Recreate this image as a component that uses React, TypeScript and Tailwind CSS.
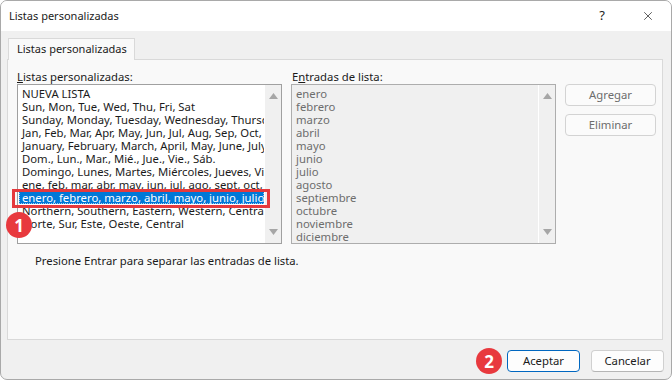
import { X } from 'lucide-react';

const customLists = [
  'NUEVA LISTA',
  'Sun, Mon, Tue, Wed, Thu, Fri, Sat',
  'Sunday, Monday, Tuesday, Wednesday, Thursday, Friday, Saturday',
  'Jan, Feb, Mar, Apr, May, Jun, Jul, Aug, Sep, Oct, Nov, Dec',
  'January, February, March, April, May, June, July, August, September, October, November, December',
  'Dom., Lun., Mar., Mié., Jue., Vie., Sáb.',
  'Domingo, Lunes, Martes, Miércoles, Jueves, Viernes, Sábado',
  'ene, feb, mar, abr, may, jun, jul, ago, sept, oct, nov, dic',
  'enero, febrero, marzo, abril, mayo, junio, julio, agosto, septiembre, octubre, noviembre, diciembre',
  'Northern, Southern, Eastern, Western, Central',
  'Norte, Sur, Este, Oeste, Central',
];

const entries = [
  'enero',
  'febrero',
  'marzo',
  'abril',
  'mayo',
  'junio',
  'julio',
  'agosto',
  'septiembre',
  'octubre',
  'noviembre',
  'diciembre',
];

function ScrollArrows() {
  return (
    <div className="w-[17px] flex flex-col justify-between items-center py-[8px] bg-[#f0f0f0] border-l border-white">
      <svg width="9" height="6" viewBox="0 0 9 6">
        <path d="M0 6 L4.5 0 L9 6 Z" fill="#a6a6a6" />
      </svg>
      <svg width="9" height="6" viewBox="0 0 9 6">
        <path d="M0 0 L4.5 6 L9 0 Z" fill="#a6a6a6" />
      </svg>
    </div>
  );
}

function Badge({ n }: { n: string }) {
  return (
    <div className="w-[26px] h-[26px] rounded-full bg-[#e8393e] text-white flex items-center justify-center text-[17px] font-bold leading-none">
      {n}
    </div>
  );
}

export default function App() {
  return (
    <div
      className="w-[672px] h-[380px] flex flex-col bg-[#f0f0f0] border border-[#a9a9a9] rounded-[7px] overflow-hidden text-[11.3px] text-[#1b1b1b]"
      style={{ fontFamily: '"Segoe UI", "Noto Sans", sans-serif' }}
    >
      {/* Title bar */}
      <div className="h-[30px] bg-white flex items-center justify-between pl-[8px] pr-[16px] shrink-0 text-[11px]">
        <span>Listas personalizadas</span>
        <div className="flex items-center gap-[36px]">
          <span className="text-[13px]">?</span>
          <X size={14} strokeWidth={1.2} />
        </div>
      </div>

      {/* Body */}
      <div className="px-[6px] pt-[7px] flex flex-col">
        <div className="flex">
          <div className="ml-[1px] w-[127px] h-[22px] bg-[#f9f9f9] border border-b-0 border-[#d9d9d9] -mb-px relative z-10 flex items-center pl-[8px] whitespace-nowrap text-[11px]">
            Listas personalizadas
          </div>
        </div>

        <div className="h-[281px] w-[656px] bg-[#f9f9f9] border border-[#d9d9d9] pl-[9px] pt-[10px]">
          <div className="flex gap-[9px]">
            {/* Left list */}
            <div className="w-[265px] flex flex-col">
              <div className="h-[14px] leading-[14px]">
                <span className="underline">L</span>istas personalizadas:
              </div>
              <div className="relative h-[160px] bg-white border border-[#a0a0a0] flex">
                <div className="flex-1 overflow-hidden pt-[2px] pl-[1px]">
                  {customLists.map((item, i) => (
                    <div
                      key={i}
                      className={
                        'h-[13px] leading-[13px] whitespace-nowrap pl-[3px] ' +
                        (i === 8 ? 'bg-[#0078d7] text-white outline outline-1 outline-dotted outline-[#9fc7ee] -outline-offset-1' : '')
                      }
                    >
                      {item}
                    </div>
                  ))}
                </div>
                <ScrollArrows />
                {/* annotation overlays */}
                <div className="absolute left-[-6px] top-[104px] w-[258px] h-[19px] border-[3px] border-[#e5393d]" />
                <div className="absolute left-[-12px] top-[127px]">
                  <Badge n="1" />
                </div>
              </div>
            </div>

            {/* Right list */}
            <div className="w-[265px] flex flex-col">
              <div className="h-[14px] leading-[14px] pl-[1px]">
                E<span className="underline">n</span>tradas de lista:
              </div>
              <div className="h-[160px] bg-[#f0f0f0] border border-[#adadad] flex text-[#6d6d6d]">
                <div className="flex-1 overflow-hidden pt-[2px] pl-[4px]">
                  {entries.map((e) => (
                    <div key={e} className="h-[13px] leading-[13px] whitespace-nowrap">
                      {e}
                    </div>
                  ))}
                </div>
                <ScrollArrows />
              </div>
            </div>

            {/* Side buttons */}
            <div className="pt-[14px] flex flex-col gap-[8px]">
              <button className="w-[91px] h-[22px] bg-[#fbfbfb] border border-[#d3d3d3] rounded-[4px] text-[#6d6d6d]">
                Agregar
              </button>
              <button className="w-[91px] h-[22px] bg-[#fbfbfb] border border-[#d3d3d3] rounded-[4px] text-[#6d6d6d]">
                Eliminar
              </button>
            </div>
          </div>

          <div className="pl-[18px] pt-[9px]">Presione Entrar para separar las entradas de lista.</div>
        </div>

        {/* Footer */}
        <div className="flex items-center justify-end pt-[8px] pr-[1px]">
          <div className="mr-[5px]">
            <Badge n="2" />
          </div>
          <button className="w-[73px] h-[22px] bg-[#fdfdfd] border border-[#0067c0] rounded-[4px]">
            Aceptar
          </button>
          <button className="ml-[11px] w-[73px] h-[22px] bg-[#fdfdfd] border border-[#d0d0d0] border-b-[#b5b5b5] rounded-[4px]">
            Cancelar
          </button>
        </div>
      </div>
    </div>
  );
}
